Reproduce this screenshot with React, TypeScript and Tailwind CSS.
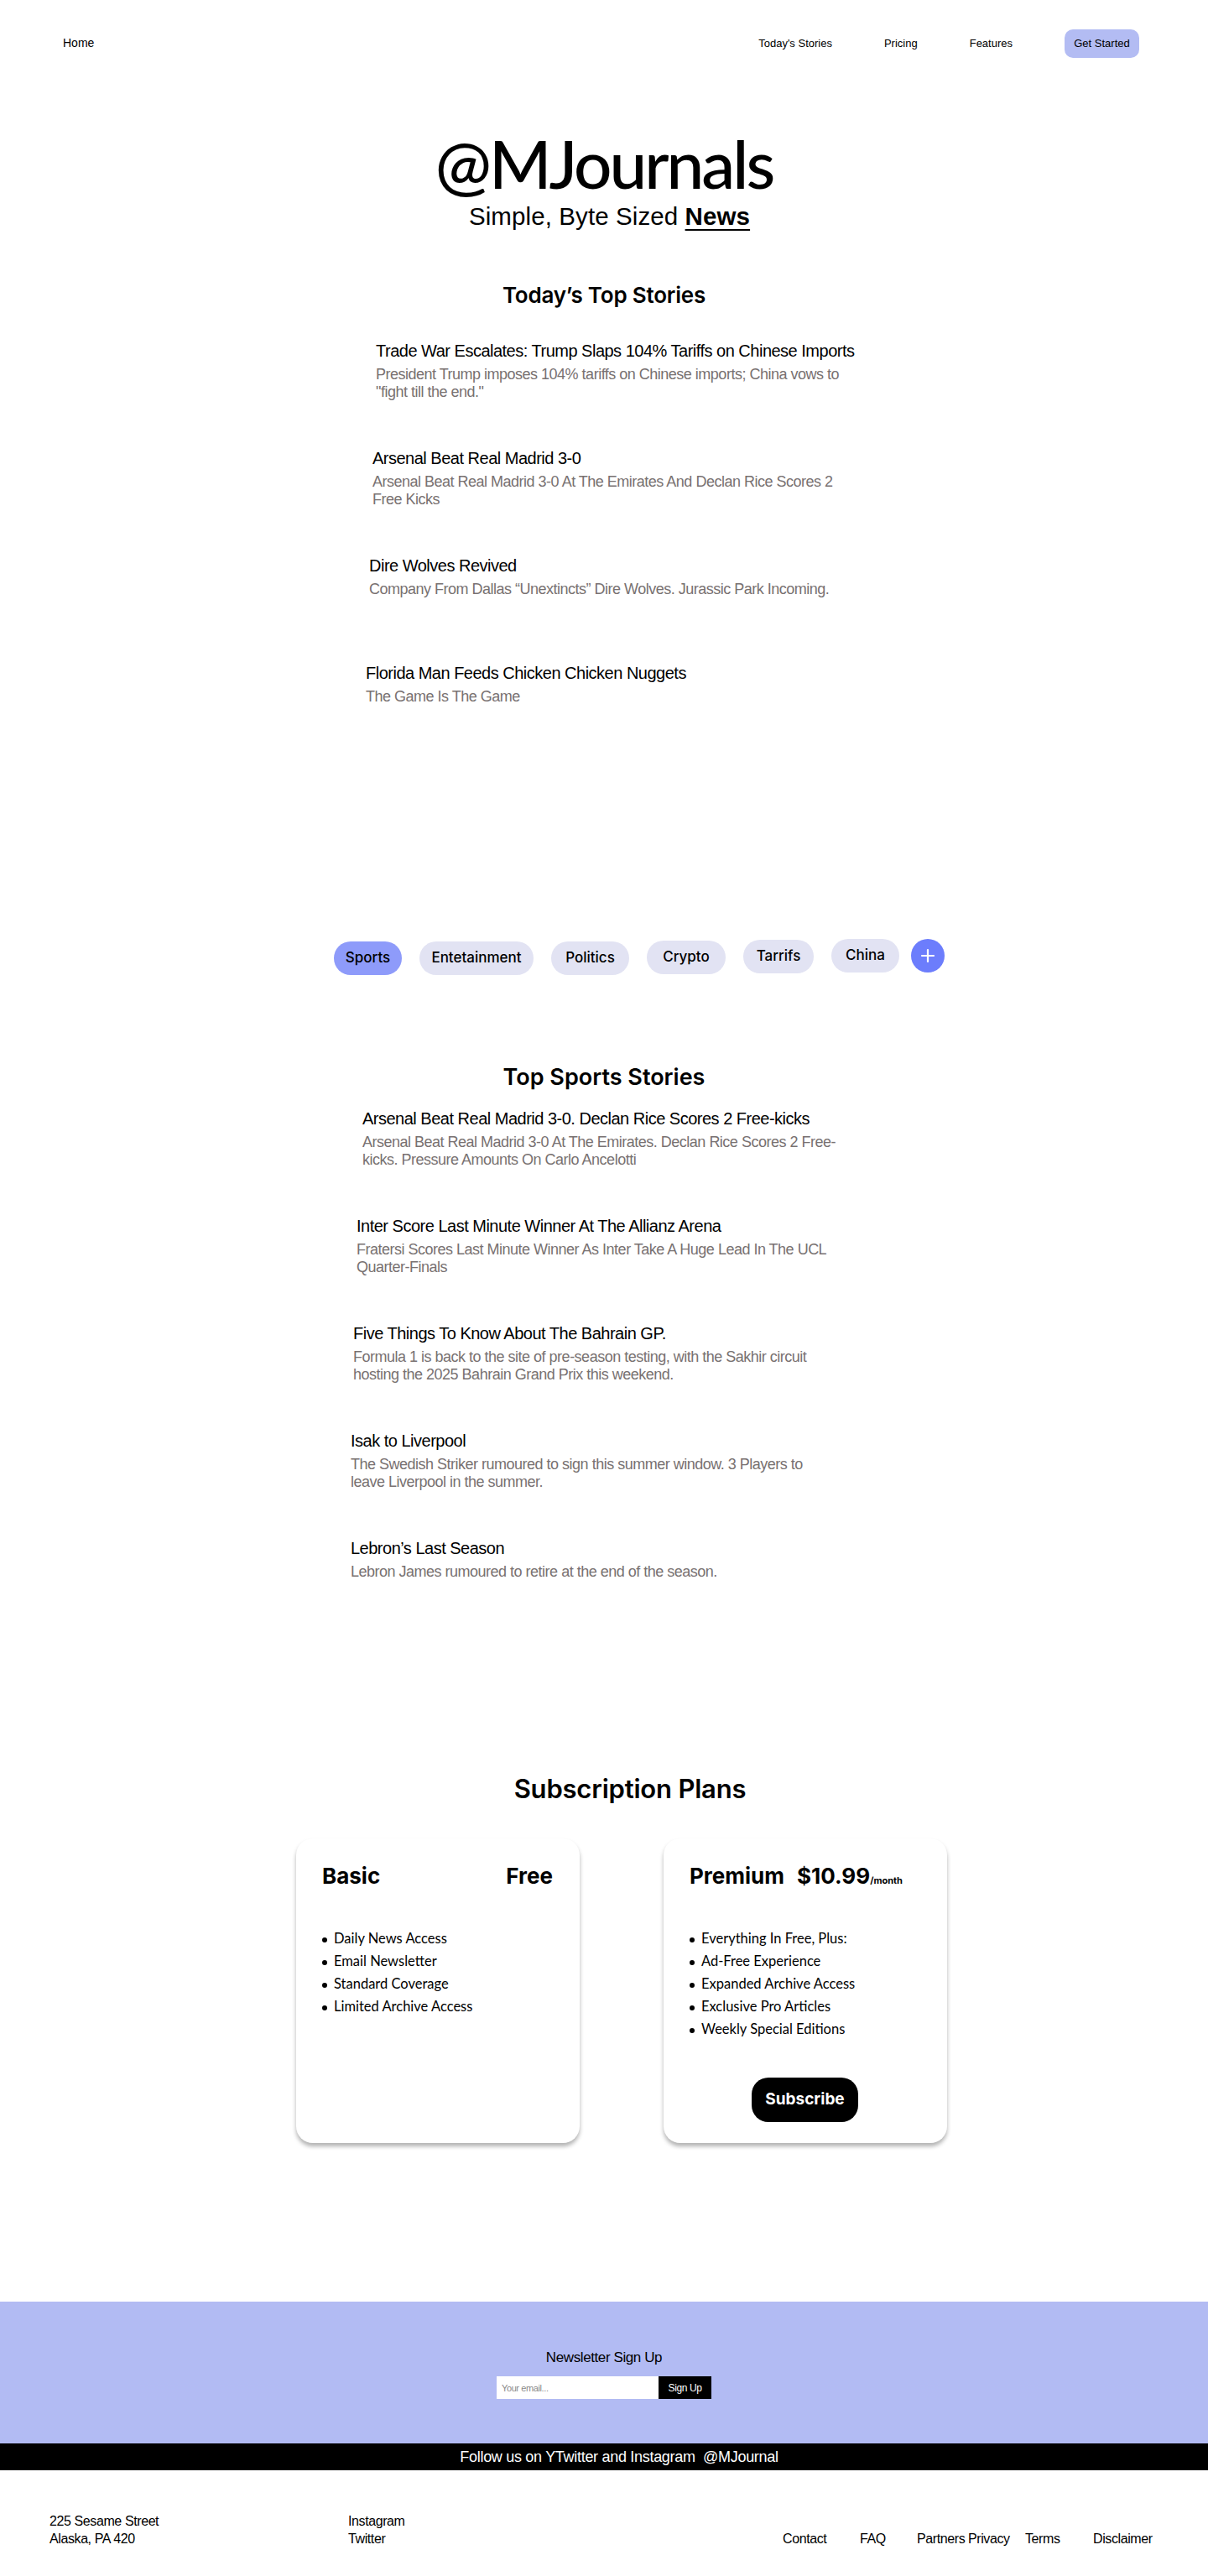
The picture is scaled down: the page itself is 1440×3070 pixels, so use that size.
import { Plus } from "lucide-react"

const topStories = [
  {
    title: "Trade War Escalates: Trump Slaps 104% Tariffs on Chinese Imports",
    desc: 'President Trump imposes 104% tariffs on Chinese imports; China vows to "fight till the end."',
    pad: "pl-[48px]",
  },
  {
    title: "Arsenal Beat Real Madrid 3-0",
    desc: "Arsenal Beat Real Madrid 3-0 At The Emirates And Declan Rice Scores 2 Free Kicks",
    pad: "pl-[44px]",
  },
  {
    title: "Dire Wolves Revived",
    desc: "Company From Dallas \u201cUnextincts\u201d Dire Wolves. Jurassic Park Incoming.",
    pad: "pl-[40px]",
  },
  {
    title: "Florida Man Feeds Chicken Chicken Nuggets",
    desc: "The Game Is The Game",
    pad: "pl-[36px]",
  },
]

const sportsStories = [
  {
    title: "Arsenal Beat Real Madrid 3-0. Declan Rice Scores 2 Free-kicks",
    desc: "Arsenal Beat Real Madrid 3-0 At The Emirates. Declan Rice Scores 2 Free-kicks. Pressure Amounts On Carlo Ancelotti",
    pad: "pl-[32px]",
  },
  {
    title: "Inter Score Last Minute Winner At The Allianz Arena",
    desc: "Fratersi Scores Last Minute Winner As Inter Take A Huge Lead In The UCL Quarter-Finals",
    pad: "pl-[25px]",
  },
  {
    title: "Five Things To Know About The Bahrain GP.",
    desc: "Formula 1 is back to the site of pre-season testing, with the Sakhir circuit hosting the 2025 Bahrain Grand Prix this weekend.",
    pad: "pl-[21px]",
  },
  {
    title: "Isak to Liverpool",
    desc: "The Swedish Striker rumoured to sign this summer window. 3 Players to leave Liverpool in the summer.",
    pad: "pl-[18px]",
  },
  {
    title: "Lebron\u2019s Last Season",
    desc: "Lebron James rumoured to retire at the end of the season.",
    pad: "pl-[18px]",
  },
]

const chips = [
  { label: "Sports", cls: "w-[81px] mt-[3px] bg-[#8e9bfa]" },
  { label: "Entetainment", cls: "w-[136px] mt-[3px] bg-[#e2e3f3]" },
  { label: "Politics", cls: "w-[93px] mt-[3px] bg-[#e2e3f3]" },
  { label: "Crypto", cls: "w-[94px] mt-[2px] bg-[#e2e3f3]" },
  { label: "Tarrifs", cls: "w-[84px] mt-[1px] bg-[#e2e3f3]" },
  { label: "China", cls: "w-[81px] mt-0 bg-[#e2e3f3]" },
]

const footerLinks = [
  { label: "Contact", cls: "w-[92px]" },
  { label: "FAQ", cls: "w-[68px]" },
  { label: "Partners", cls: "w-[61px]" },
  { label: "Privacy", cls: "w-[68px]" },
  { label: "Terms", cls: "w-[81px]" },
  { label: "Disclaimer", cls: "" },
]

function Story({ title, desc, pad }: { title: string; desc: string; pad: string }) {
  return (
    <div className={`h-[128px] ${pad}`}>
      <div className="w-[575px]">
        <h3 className="text-[20px] leading-[24px] tracking-[-0.5px] text-black">{title}</h3>
        <p className="mt-[6px] text-[18px] leading-[21px] tracking-[-0.5px] text-[#787171]">{desc}</p>
      </div>
    </div>
  )
}

function Bullet({ text }: { text: string }) {
  return (
    <li className="flex items-center gap-[8px] h-[27px]">
      <span className="w-[6px] h-[6px] mt-[3px] rounded-full bg-black shrink-0" />
      <span>{text}</span>
    </li>
  )
}

export default function App() {
  return (
    <div className="w-[1440px] bg-white font-['Liberation_Sans',Arial,sans-serif] text-black">
      {/* Nav */}
      <header className="h-[103px] flex items-center justify-between pl-[75px] pr-[82px] text-[13px]">
        <a href="#" className="text-[14px] text-black">Home</a>
        <nav className="flex items-center gap-[62px]">
          <a href="#">Today&apos;s Stories</a>
          <a href="#">Pricing</a>
          <a href="#">Features</a>
          <a href="#" className="w-[89px] h-[34px] rounded-[10px] bg-[#b3bcf3] flex items-center justify-center">
            Get Started
          </a>
        </nav>
      </header>

      {/* Hero */}
      <section className="flex flex-col items-center">
        <h1 className="mt-[51px] font-['Lato',sans-serif] font-medium text-[80px] leading-[80px] tracking-[-3px]">
          @MJournals
        </h1>
        <p className="mt-[8px] ml-[13px] text-[29.5px] leading-[32px] tracking-[0.1px]">
          Simple, Byte Sized{" "}
          <span className="font-bold underline decoration-2 underline-offset-[5px]">News</span>
        </p>
        <h2 className="mt-[63px] font-['Inter',sans-serif] font-semibold text-[26px] leading-[30px] tracking-[-0.2px]">
          Today&rsquo;s Top Stories
        </h2>
      </section>

      <section className="w-[640px] mx-auto mt-[39px]">
        {topStories.map((s) => (
          <Story key={s.title} {...s} />
        ))}
      </section>

      {/* Category chips */}
      <div className="mt-[201px] flex items-start pl-[398px] font-['Inter',sans-serif] font-medium text-[17px]">
        <div className="flex items-start gap-[21px]">
          {chips.map((c) => (
            <button key={c.label} className={`h-[40px] rounded-[20px] flex items-center justify-center ${c.cls}`}>
              {c.label}
            </button>
          ))}
        </div>
        <button className="ml-[14px] w-[40px] h-[40px] rounded-full bg-[#6c7dfc] flex items-center justify-center text-white">
          <Plus size={24} strokeWidth={2.2} />
        </button>
      </div>

      <h2 className="mt-[107px] text-center font-['Inter',sans-serif] font-semibold text-[27px] leading-[30px]">
        Top Sports Stories
      </h2>

      <section className="w-[640px] mx-auto mt-[22px]">
        {sportsStories.map((s) => (
          <Story key={s.title} {...s} />
        ))}
      </section>

      {/* Plans */}
      <h2 className="mt-[153px] pl-[62px] text-center font-['Inter',sans-serif] font-semibold text-[31px] leading-[36px] tracking-[-0.2px]">
        Subscription Plans
      </h2>

      <section className="mt-[41px] flex justify-center gap-[100px] pl-[42px]">
        <div className="w-[338px] h-[363px] rounded-[20px] bg-white shadow-[0_4px_5px_rgba(0,0,0,0.3)] pt-[29px] pl-[31px] pr-[32px]">
          <div className="h-[32px] flex justify-between font-['Inter',sans-serif] font-bold text-[26px] leading-[32px]">
            <span>Basic</span>
            <span>Free</span>
          </div>
          <ul className="mt-[45px] font-['Lato',sans-serif] text-[16.5px] leading-[27px]">
            <Bullet text="Daily News Access" />
            <Bullet text="Email Newsletter" />
            <Bullet text="Standard Coverage" />
            <Bullet text="Limited Archive Access" />
          </ul>
        </div>

        <div className="w-[338px] h-[363px] rounded-[20px] bg-white shadow-[0_4px_5px_rgba(0,0,0,0.3)] pt-[29px] pl-[31px] pr-[32px]">
          <div className="h-[32px] flex items-baseline font-['Inter',sans-serif] font-bold text-[26px] leading-[32px]">
            <span>Premium</span>
            <span className="ml-[15px]">$10.99</span>
            <span className="text-[11px] leading-[11px]">/month</span>
          </div>
          <ul className="mt-[45px] font-['Lato',sans-serif] text-[16.5px] leading-[27px]">
            <Bullet text="Everything In Free, Plus:" />
            <Bullet text="Ad-Free Experience" />
            <Bullet text="Expanded Archive Access" />
            <Bullet text="Exclusive Pro Articles" />
            <Bullet text="Weekly Special Editions" />
          </ul>
          <div className="mt-[44px] flex justify-center">
            <button className="w-[127px] h-[53px] rounded-[20px] bg-black text-white font-['Inter',sans-serif] font-bold text-[19px]">
              Subscribe
            </button>
          </div>
        </div>
      </section>

      {/* Newsletter */}
      <section className="mt-[189px] h-[169px] bg-[#b2bbf3] pt-[57px] flex flex-col items-center">
        <h3 className="text-[17px] leading-[20px] tracking-[-0.4px]">Newsletter Sign Up</h3>
        <form className="mt-[12px] flex h-[27px]">
          <input
            type="email"
            placeholder="Your email..."
            className="w-[193px] h-[27px] bg-white px-[6px] text-[11px] tracking-[-0.4px] placeholder:text-[#8a8a8a] outline-none"
          />
          <button type="button" className="w-[63px] h-[27px] bg-black text-white text-[12px] tracking-[-0.4px]">
            Sign Up
          </button>
        </form>
      </section>

      <div className="h-[32px] bg-black text-white flex items-center justify-center pl-[36px] text-[18px] tracking-[-0.3px]">
        Follow us on YTwitter and Instagram&nbsp; @MJournal
      </div>

      {/* Footer */}
      <footer className="h-[126px] pt-[50px] pl-[59px] text-[16px] leading-[21px] tracking-[-0.4px]">
        <div className="flex items-end">
          <div className="w-[356px]">
            <p>225 Sesame Street</p>
            <p>Alaska, PA 420</p>
          </div>
          <div className="w-[518px]">
            <p>Instagram</p>
            <p>Twitter</p>
          </div>
          <div className="flex">
            {footerLinks.map((l) => (
              <a key={l.label} href="#" className={l.cls}>
                {l.label}
              </a>
            ))}
          </div>
        </div>
      </footer>
    </div>
  )
}
